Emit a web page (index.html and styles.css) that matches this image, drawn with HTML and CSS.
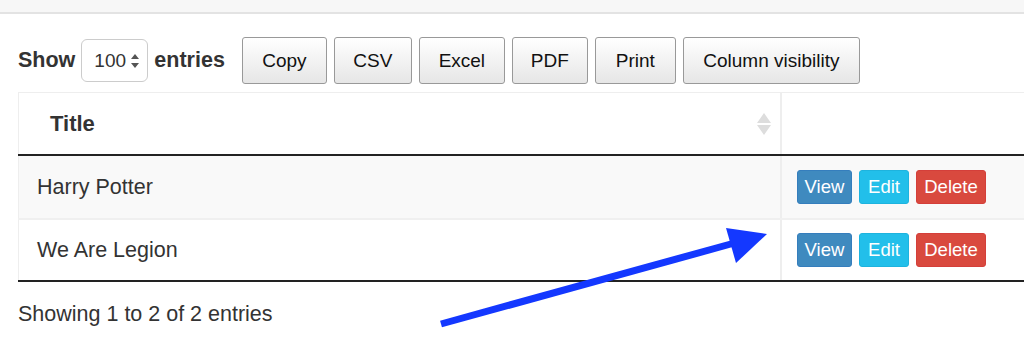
FILE: index.html
```html
<!DOCTYPE html>
<html lang="en">
<head>
    <meta charset="UTF-8">
    <title>Books</title>
    <link rel="stylesheet" href="styles.css">
</head>
<body>
    <div class="topbar"></div>
    <div class="page">
        <div class="toolbar">
            <label class="length">Show
                <span class="select">100
                    <svg width="8" height="14" viewBox="0 0 8 14"><path d="M4 0 L8 5 L0 5 Z M0 9 L8 9 L4 14 Z" fill="#555"/></svg>
                </span>
                entries</label>
            <div class="buttons">
                <button type="button" class="dt-btn btn-copy">Copy</button>
                <button type="button" class="dt-btn btn-csv">CSV</button>
                <button type="button" class="dt-btn btn-excel">Excel</button>
                <button type="button" class="dt-btn btn-pdf">PDF</button>
                <button type="button" class="dt-btn btn-print">Print</button>
                <button type="button" class="dt-btn btn-colvis">Column visibility</button>
            </div>
        </div>

        <table class="books">
            <thead>
                <tr>
                    <th class="sorting">Title
                        <svg class="sort-icon" width="14" height="22" viewBox="0 0 14 22"><path d="M7 0 L14 10 L0 10 Z M0 12 L14 12 L7 22 Z" fill="#ddd"/></svg>
                    </th>
                    <th class="actions-head"></th>
                </tr>
            </thead>
            <tbody>
                <tr class="odd">
                    <td>Harry Potter</td>
                    <td class="action-cell">
                        <div class="actions">
                            <button type="button" class="btn btn-view">View</button>
                            <button type="button" class="btn btn-edit">Edit</button>
                            <button type="button" class="btn btn-delete">Delete</button>
                        </div>
                    </td>
                </tr>
                <tr class="even">
                    <td>We Are Legion</td>
                    <td class="action-cell">
                        <div class="actions">
                            <button type="button" class="btn btn-view">View</button>
                            <button type="button" class="btn btn-edit">Edit</button>
                            <button type="button" class="btn btn-delete">Delete</button>
                        </div>
                    </td>
                </tr>
            </tbody>
        </table>

        <div class="info">Showing 1 to 2 of 2 entries</div>
    </div>

    <!-- annotation arrow drawn over the screenshot -->
    <svg class="arrow" width="1024" height="355" viewBox="0 0 1024 355">
        <line x1="441" y1="324" x2="738" y2="242" stroke="#1438ff" stroke-width="7"/>
        <polygon points="726,228 767,234 736,263" fill="#1438ff"/>
    </svg>
</body>
</html>
```

FILE: styles.css
```css
body {
    margin: 0;
    font-family: "Liberation Sans", Arial, sans-serif;
    color: #333;
    background-color: white;
    overflow: hidden;
    position: relative;
    height: 355px;
}
.topbar {
    height: 12px;
    background-color: #f7f7f7;
    border-bottom: 2px solid #e3e3e3;
}
.page {
    padding: 23px 0 0 18px;
}
.toolbar {
    display: flex;
    align-items: center;
    gap: 17px;
    height: 47px;
}
.length {
    display: flex;
    align-items: center;
    gap: 6px;
    font-size: 21.5px;
    font-weight: bold;
    color: #333;
}
.select {
    display: flex;
    align-items: center;
    justify-content: space-between;
    box-sizing: border-box;
    width: 67px;
    height: 43px;
    padding: 0 8px 0 12px;
    border: 1px solid #ccc;
    border-radius: 6px;
    font-size: 19px;
    font-weight: normal;
    color: #333;
}
.buttons {
    display: flex;
    gap: 7px;
}
.dt-btn {
    height: 47px;
    padding: 0;
    font-family: "Liberation Sans", Arial, sans-serif;
    font-size: 19px;
    color: #111;
    background: linear-gradient(to bottom, #ffffff 0%, #e6e6e6 100%);
    border: 1px solid #999;
    border-radius: 3px;
}
.btn-copy { width: 85px; }
.btn-csv { width: 78px; }
.btn-excel { width: 86px; }
.btn-pdf { width: 76px; }
.btn-print { width: 81px; }
.btn-colvis { width: 177px; }

.books {
    margin-top: 8px;
    width: 1030px;
    border-collapse: collapse;
    border-left: 1px solid #eee;
    border-top: 1px solid #eee;
    font-size: 21.5px;
}
.books th {
    height: 61px;
    text-align: left;
    font-weight: bold;
    font-size: 22px;
    padding: 0 0 0 31px;
    border-bottom: 2px solid #222;
    border-right: 2px solid #eee;
    position: relative;
}
.books th.sorting {
    width: 730px;
}
.sort-icon {
    position: absolute;
    right: 9px;
    top: 20px;
}
.books td {
    padding: 0 0 0 18px;
    border-right: 2px solid #eee;
}
.books td.action-cell {
    padding-left: 15px;
}
.books tr.odd td {
    height: 62px;
    background-color: #f9f9f9;
    border-bottom: 2px solid #f0f0f0;
}
.books tr.even td {
    height: 60px;
    border-bottom: 2px solid #222;
}
.actions {
    display: flex;
    gap: 7px;
}
.btn {
    height: 34px;
    padding: 0;
    font-family: "Liberation Sans", Arial, sans-serif;
    font-size: 18.5px;
    color: white;
    border-radius: 3px;
    border: 1px solid transparent;
}
.btn-view {
    width: 55px;
    background-color: #3f8abf;
    border-color: #357ebd;
}
.btn-edit {
    width: 50px;
    background-color: #22bfea;
    border-color: #1eb3de;
}
.btn-delete {
    width: 70px;
    background-color: #d9493e;
    border-color: #d43f3a;
}
.info {
    margin-top: 20px;
    font-size: 21.5px;
    color: #333;
}
.arrow {
    position: absolute;
    left: 0;
    top: 0;
}
```
